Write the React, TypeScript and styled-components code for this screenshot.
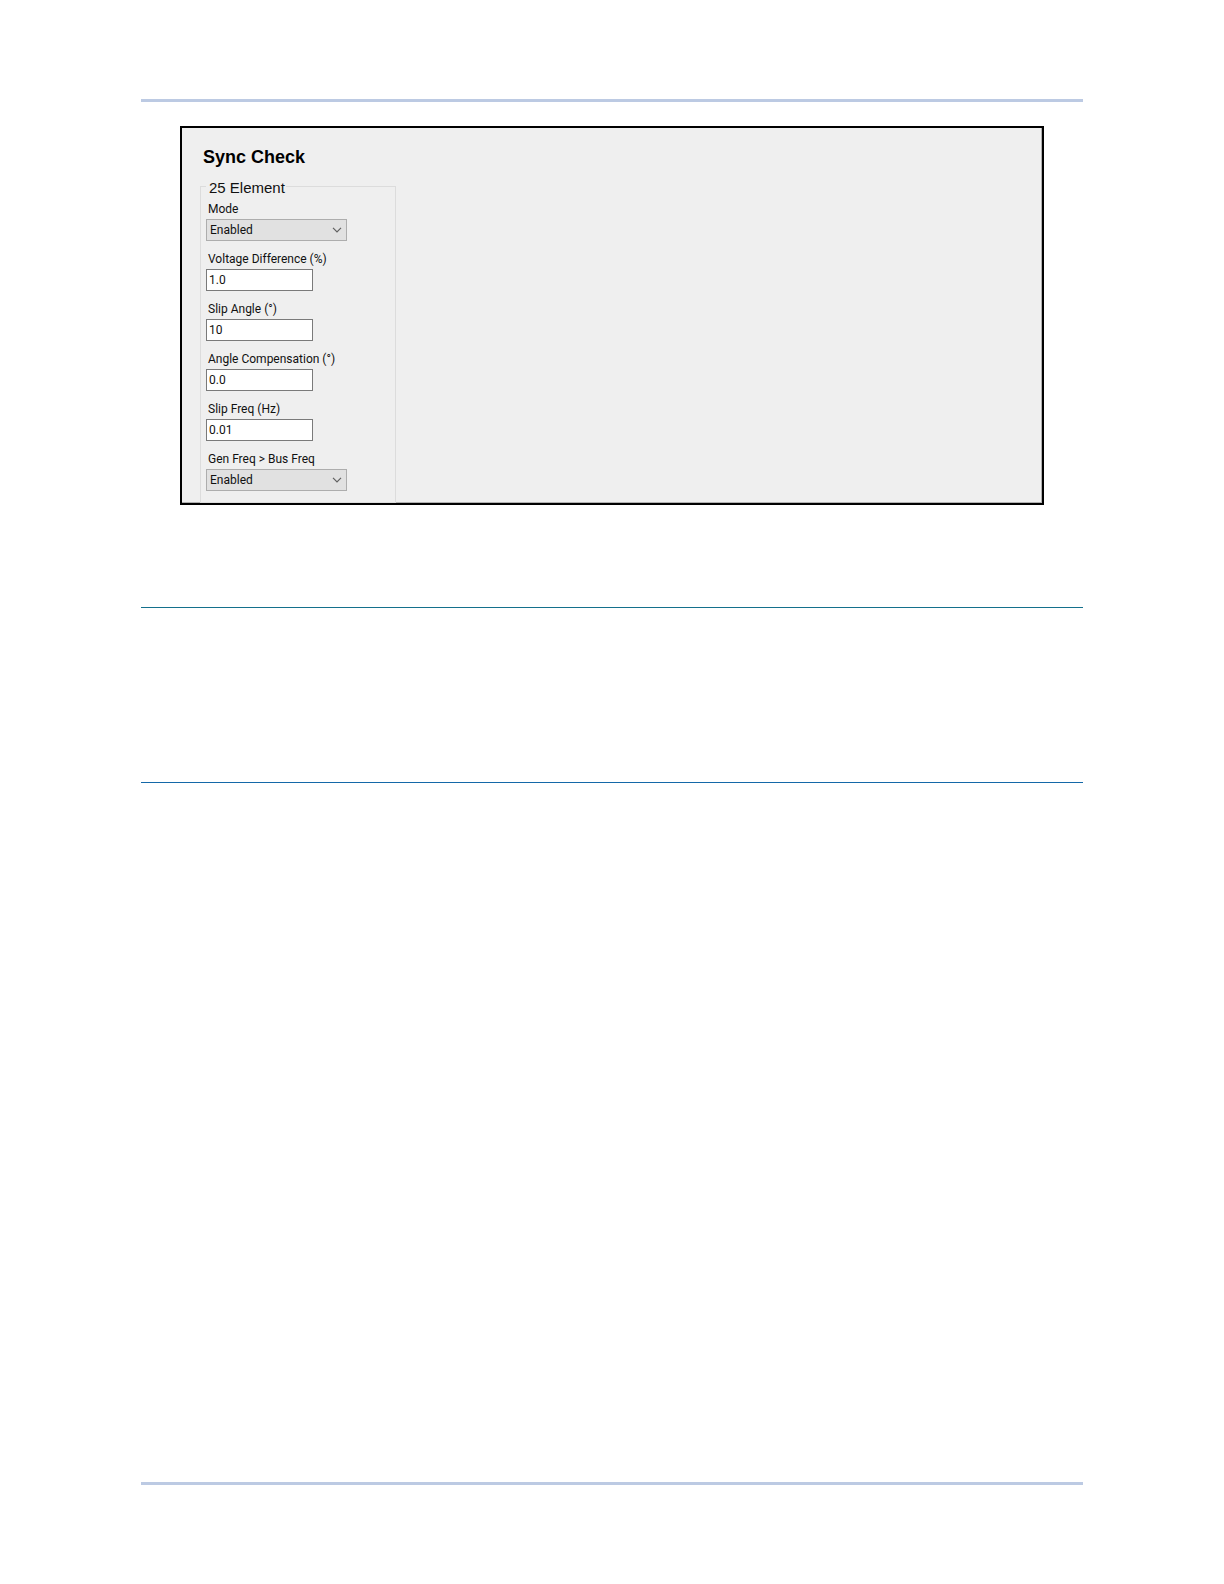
import React, {useState} from 'react';
import styled, {createGlobalStyle} from 'styled-components';

interface IField {
  id: string;
  label: string;
  value: string;
  options?: string[];
}

const modes = ['Enabled', 'Disabled'];

const fields: IField[] = [
  {id: 'mode', label: 'Mode', value: 'Enabled', options: modes},
  {id: 'voltage', label: 'Voltage Difference (%)', value: '1.0'},
  {id: 'slip-angle', label: 'Slip Angle (°)', value: '10'},
  {id: 'angle-comp', label: 'Angle Compensation (°)', value: '0.0'},
  {id: 'slip-freq', label: 'Slip Freq (Hz)', value: '0.01'},
  {
    id: 'gen-bus',
    label: 'Gen Freq > Bus Freq',
    value: 'Enabled',
    options: modes,
  },
];

const Field = ({field}: {field: IField}) => {
  const {id, label, options} = field;
  const [value, setValue] = useState(field.value);

  return (
    <StyledField>
      <Label htmlFor={id}>{label}</Label>
      {options ? (
        <SelectWrap>
          <Select id={id} value={value} onChange={e => setValue(e.target.value)}>
            {options.map(option => (
              <option key={option}>{option}</option>
            ))}
          </Select>
          <Chevron viewBox="0 0 10 6" aria-hidden="true">
            <path d="M1 0.8 L5 4.8 L9 0.8" />
          </Chevron>
        </SelectWrap>
      ) : (
        <Input
          id={id}
          type="text"
          value={value}
          onChange={e => setValue(e.target.value)}
        />
      )}
    </StyledField>
  );
};

const App = () => (
  <>
    <GlobalStyle />
    <Page>
      <EdgeRule />
      <Panel>
        <Title>Sync Check</Title>
        <Group>
          <legend>25 Element</legend>
          {fields.map(field => (
            <Field key={field.id} field={field} />
          ))}
        </Group>
      </Panel>
      <SectionRule $color="#14708c" $space={102} />
      <SectionRule $color="#1468a8" $space={174} />
      <Footer>
        <EdgeRule />
      </Footer>
    </Page>
  </>
);

const GlobalStyle = createGlobalStyle`
  * {
    box-sizing: border-box;
  }
  body {
    margin: 0;
    background: #fff;
    color: #111;
    font-family: 'Liberation Sans', Arial, sans-serif;
  }
`;

const Page = styled.main`
  display: flex;
  flex-direction: column;
  min-height: 100vh;
  padding: 99px 141px;
`;

const EdgeRule = styled.hr`
  width: 100%;
  height: 3px;
  margin: 0;
  border: none;
  background: #bccae3;
`;

const SectionRule = styled.hr<{$color: string; $space: number}>`
  width: 100%;
  height: 1px;
  margin: ${({$space}) => $space}px 0 0;
  border: none;
  background: ${({$color}) => $color};
`;

const Footer = styled.footer`
  margin-top: auto;
`;

const Panel = styled.section`
  margin: 24px 39px 0;
  padding: 19px 18px 0;
  border: 2px solid #000;
  background: #efefef;
  box-shadow: inset -1px -1px 0 #b0b0b0;
`;

const Title = styled.h1`
  margin: 0 0 9px;
  padding-left: 3px;
  color: #000;
  font-size: 18px;
  line-height: 20px;
`;

const Group = styled.fieldset`
  display: flex;
  flex-direction: column;
  gap: 10px;
  width: 196px;
  min-width: 0;
  margin: 0;
  padding: 4px 5px 11px;
  border: 1px solid #dcdcdc;

  legend {
    padding: 3px 1px 0 3px;
    font-size: 15px;
    line-height: 18px;
  }
`;

const StyledField = styled.div`
  display: flex;
  flex-direction: column;
  align-items: flex-start;
  gap: 2px;
  font-family: Roboto, 'Liberation Sans', sans-serif;
  font-size: 12px;
`;

const Label = styled.label`
  padding-left: 2px;
  line-height: 16px;
`;

const Input = styled.input`
  width: 107px;
  height: 22px;
  padding: 0 2px;
  border: 1px solid #7a7a7a;
  border-radius: 0;
  background: #fff;
  color: inherit;
  font: inherit;
`;

const SelectWrap = styled.div`
  position: relative;
`;

const Select = styled.select`
  display: block;
  width: 141px;
  height: 22px;
  padding: 0 20px 0 3px;
  border: 1px solid #adadad;
  border-radius: 0;
  appearance: none;
  background: #e1e1e1;
  color: inherit;
  font: inherit;
`;

const Chevron = styled.svg`
  position: absolute;
  top: 8px;
  right: 5px;
  width: 10px;
  height: 6px;
  fill: none;
  stroke: #606060;
  stroke-width: 1.2;
  pointer-events: none;
`;

export default App;
